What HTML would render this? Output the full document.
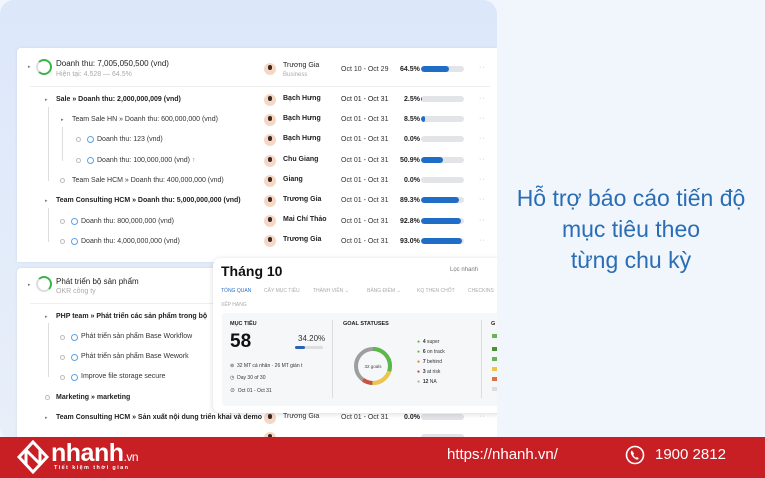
<!DOCTYPE html>
<html><head><meta charset="utf-8"><style>
*{margin:0;padding:0;box-sizing:border-box}
body{width:765px;height:478px;overflow:hidden;background:#f0f6fc;font-family:"Liberation Sans","Noto Sans CJK SC",sans-serif;position:relative;color:#222}
.abs{position:absolute}
.panel{left:0;top:0;width:497px;height:440px;background:linear-gradient(180deg,#dce7fa,#e8eff9);border-radius:14px}
.card{background:#fff;left:17px;width:480px;border-radius:4px 0 0 0;box-shadow:0 0 3px rgba(0,0,0,.08)}
.t{position:absolute;font-size:7px;white-space:nowrap;color:#333}
.b{font-weight:bold;color:#222}
.av{position:absolute;width:12px;height:12px;border-radius:50%;background:#f6d7c6}
.av:after{content:"";position:absolute;left:4px;top:2px;width:4px;height:5px;border-radius:2px;background:#3b2a24}
.bar{position:absolute;width:43px;height:6px;border-radius:3px;background:#e2e4e8;overflow:hidden}
.bar i{display:block;height:100%;background:#1f6dc6;border-radius:3px}
.dots{position:absolute;font-size:7px;color:#aaa;letter-spacing:1px}
.ic{position:absolute;width:7px;height:7px;border-radius:50%;border:1.5px solid #5aa3e8}
.ci{position:absolute;width:5px;height:5px;border-radius:50%;border:1px solid #bbb}
.tri{position:absolute;font-size:5px;color:#777}
.ln{position:absolute;background:#ddd}
.clip{position:absolute;left:0;top:0;width:497px;height:437px;overflow:hidden}
</style></head><body>
<div class="abs panel"></div>
<div class="clip">
<div class="abs card" style="top:48px;height:214px"></div>
<div class="abs card" style="top:268px;height:172px"></div>

<div class="tri" style="left:28px;top:64px">▸</div>
<div class="abs" style="left:36px;top:59px;width:16px;height:16px;border-radius:50%;border:2.5px solid #ddd;border-top-color:#3cb548;border-right-color:#3cb548;border-bottom-color:#3cb548"></div>
<div class="t" style="left:56px;top:59px;font-size:8px;color:#222">Doanh thu: 7,005,050,500 (vnd)</div>
<div class="t" style="left:56px;top:71px;color:#aaa">Hiện tại: 4.528 — 64.5%</div>
<div class="av" style="left:264px;top:63px"></div>
<div class="t b" style="left:283px;top:62px;font-weight:normal">Trương Gia</div>
<div class="t" style="left:283px;top:72px;font-size:6px;color:#aaa">Business</div>
<div class="t" style="left:341px;top:66px">Oct 10 - Oct 29</div>
<div class="t b" style="left:400px;top:66px">64.5%</div>
<div class="bar" style="left:421px;top:66px"><i style="width:65%"></i></div>
<div class="dots" style="left:479px;top:64px">··</div>
<div class="ln" style="left:30px;top:86px;width:460px;height:1px;background:#eee"></div>

<div class="ln" style="left:48px;top:107px;width:1px;height:74px"></div>
<div class="ln" style="left:62px;top:127px;width:1px;height:34px"></div>
<div class="ln" style="left:48px;top:208px;width:1px;height:34px"></div>

<div class="tri" style="left:45px;top:97px">▸</div>
<div class="t b" style="left:56px;top:96px">Sale » Doanh thu: 2,000,000,009 (vnd)</div>
<div class="av" style="left:264px;top:94px"></div><div class="t b" style="left:283px;top:95px">Bạch Hưng</div>
<div class="t b" style="left:341px;top:96px;font-weight:normal">Oct 01 - Oct 31</div><div class="t b" style="left:404px;top:96px">2.5%</div>
<div class="bar" style="left:421px;top:96px"><i style="width:3%"></i></div><div class="dots" style="left:479px;top:95px">··</div>

<div class="tri" style="left:61px;top:117px">▸</div>
<div class="t" style="left:72px;top:116px">Team Sale HN » Doanh thu: 600,000,000 (vnd)</div>
<div class="av" style="left:264px;top:114px"></div><div class="t b" style="left:283px;top:115px">Bạch Hưng</div>
<div class="t" style="left:341px;top:116px">Oct 01 - Oct 31</div><div class="t b" style="left:404px;top:116px">8.5%</div>
<div class="bar" style="left:421px;top:116px"><i style="width:9%"></i></div><div class="dots" style="left:479px;top:115px">··</div>

<div class="ci" style="left:76px;top:137px"></div><div class="ic" style="left:87px;top:136px"></div>
<div class="t" style="left:97px;top:136px">Doanh thu: 123 (vnd)</div>
<div class="av" style="left:264px;top:134px"></div><div class="t b" style="left:283px;top:135px">Bạch Hưng</div>
<div class="t" style="left:341px;top:136px">Oct 01 - Oct 31</div><div class="t b" style="left:404px;top:136px">0.0%</div>
<div class="bar" style="left:421px;top:136px"></div><div class="dots" style="left:479px;top:135px">··</div>

<div class="ci" style="left:76px;top:158px"></div><div class="ic" style="left:87px;top:157px"></div>
<div class="t" style="left:97px;top:157px">Doanh thu: 100,000,000 (vnd) <span style="color:#3cb548">↑</span></div>
<div class="av" style="left:264px;top:155px"></div><div class="t b" style="left:283px;top:156px">Chu Giang</div>
<div class="t" style="left:341px;top:157px">Oct 01 - Oct 31</div><div class="t b" style="left:400px;top:157px">50.9%</div>
<div class="bar" style="left:421px;top:157px"><i style="width:51%"></i></div><div class="dots" style="left:479px;top:156px">··</div>

<div class="ci" style="left:60px;top:178px"></div>
<div class="t" style="left:72px;top:177px">Team Sale HCM » Doanh thu: 400,000,000 (vnd)</div>
<div class="av" style="left:264px;top:175px"></div><div class="t b" style="left:283px;top:176px">Giang</div>
<div class="t" style="left:341px;top:177px">Oct 01 - Oct 31</div><div class="t b" style="left:404px;top:177px">0.0%</div>
<div class="bar" style="left:421px;top:177px"></div><div class="dots" style="left:479px;top:176px">··</div>

<div class="tri" style="left:45px;top:198px">▸</div>
<div class="t b" style="left:56px;top:197px">Team Consulting HCM » Doanh thu: 5,000,000,000 (vnd)</div>
<div class="av" style="left:264px;top:195px"></div><div class="t b" style="left:283px;top:196px">Trương Gia</div>
<div class="t" style="left:341px;top:197px">Oct 01 - Oct 31</div><div class="t b" style="left:400px;top:197px">89.3%</div>
<div class="bar" style="left:421px;top:197px"><i style="width:89%"></i></div><div class="dots" style="left:479px;top:196px">··</div>

<div class="ci" style="left:60px;top:219px"></div><div class="ic" style="left:71px;top:218px"></div>
<div class="t" style="left:81px;top:218px">Doanh thu: 800,000,000 (vnd)</div>
<div class="av" style="left:264px;top:215px"></div><div class="t b" style="left:283px;top:216px">Mai Chí Thảo</div>
<div class="t" style="left:341px;top:218px">Oct 01 - Oct 31</div><div class="t b" style="left:400px;top:218px">92.8%</div>
<div class="bar" style="left:421px;top:218px"><i style="width:93%"></i></div><div class="dots" style="left:479px;top:217px">··</div>

<div class="ci" style="left:60px;top:239px"></div><div class="ic" style="left:71px;top:238px"></div>
<div class="t" style="left:81px;top:238px">Doanh thu: 4,000,000,000 (vnd)</div>
<div class="av" style="left:264px;top:235px"></div><div class="t b" style="left:283px;top:236px">Trương Gia</div>
<div class="t" style="left:341px;top:238px">Oct 01 - Oct 31</div><div class="t b" style="left:400px;top:238px">93.0%</div>
<div class="bar" style="left:421px;top:238px"><i style="width:95%"></i></div><div class="dots" style="left:479px;top:237px">··</div>

<div class="tri" style="left:28px;top:282px">▸</div>
<div class="abs" style="left:36px;top:276px;width:16px;height:16px;border-radius:50%;border:2.5px solid #ddd;border-top-color:#3cb548;border-right-color:#3cb548"></div>
<div class="t" style="left:56px;top:277px;font-size:8px;color:#222">Phát triển bộ sản phẩm</div>
<div class="t" style="left:56px;top:288px;color:#aaa">OKR công ty</div>
<div class="ln" style="left:30px;top:303px;width:460px;height:1px;background:#eee"></div>
<div class="ln" style="left:48px;top:323px;width:1px;height:54px"></div>

<div class="tri" style="left:45px;top:314px">▸</div>
<div class="t b" style="left:56px;top:313px">PHP team » Phát triển các sản phẩm trong bộ</div>
<div class="ci" style="left:60px;top:335px"></div><div class="ic" style="left:71px;top:334px"></div>
<div class="t" style="left:81px;top:333px">Phát triển sản phẩm Base Workflow</div>
<div class="ci" style="left:60px;top:355px"></div><div class="ic" style="left:71px;top:354px"></div>
<div class="t" style="left:81px;top:353px">Phát triển sản phẩm Base Wework</div>
<div class="ci" style="left:60px;top:375px"></div><div class="ic" style="left:71px;top:374px"></div>
<div class="t" style="left:81px;top:373px">Improve file storage secure</div>
<div class="ci" style="left:45px;top:395px"></div>
<div class="t b" style="left:56px;top:394px">Marketing » marketing</div>
<div class="tri" style="left:45px;top:415px">▸</div>
<div class="t b" style="left:56px;top:414px">Team Consulting HCM » Sản xuất nội dung triển khai và demo</div>
<div class="av" style="left:264px;top:412px"></div><div class="t" style="left:283px;top:413px">Trương Gia</div>
<div class="t" style="left:341px;top:414px">Oct 01 - Oct 31</div><div class="t b" style="left:404px;top:414px">0.0%</div>
<div class="bar" style="left:421px;top:414px"></div><div class="dots" style="left:479px;top:413px">··</div>
<div class="av" style="left:264px;top:432px"></div>
<div class="bar" style="left:421px;top:434px"></div>

<!-- popup -->
<div class="abs" style="left:213px;top:258px;width:300px;height:155px;background:#fff;border-radius:8px;box-shadow:0 1px 6px rgba(0,0,0,.15)"></div>
<div class="t" style="left:221px;top:263px;font-size:14px;font-weight:bold;color:#111">Tháng 10</div>
<div class="t" style="left:450px;top:267px;font-size:6px;color:#777">Lọc nhanh</div>
<div class="t" style="left:221px;top:288px;font-size:5px;color:#2d72c4">TỔNG QUAN</div>
<div class="t" style="left:264px;top:288px;font-size:5px;color:#aaa">CÂY MỤC TIÊU</div>
<div class="t" style="left:313px;top:288px;font-size:5px;color:#aaa">THÀNH VIÊN ⌄</div>
<div class="t" style="left:367px;top:288px;font-size:5px;color:#aaa">BẢNG ĐIỂM ⌄</div>
<div class="t" style="left:417px;top:288px;font-size:5px;color:#aaa">KQ THEN CHỐT</div>
<div class="t" style="left:468px;top:288px;font-size:5px;color:#aaa">CHECKINS</div>
<div class="t" style="left:221px;top:302px;font-size:5px;color:#aaa">XẾP HẠNG</div>
<div class="abs" style="left:222px;top:313px;width:290px;height:93px;background:#f6f7f9;border-radius:3px"></div>
<div class="ln" style="left:332px;top:320px;width:1px;height:78px"></div>
<div class="ln" style="left:481px;top:320px;width:1px;height:78px"></div>
<div class="t b" style="left:230px;top:321px;font-size:5.5px">MỤC TIÊU</div>
<div class="t b" style="left:230px;top:331px;font-size:19px;color:#111">58</div>
<div class="t" style="left:298px;top:334px;font-size:8px">34.20%</div>
<div class="abs" style="left:295px;top:346px;width:28px;height:3px;background:#ddd;border-radius:2px"><div style="width:10px;height:3px;background:#2d62b8;border-radius:2px"></div></div>
<div class="t" style="left:230px;top:363px;font-size:5px">⊚&nbsp; 32 MT cá nhân · 26 MT gián t</div>
<div class="t" style="left:230px;top:375px;font-size:5px">◷&nbsp; Day 30 of 30</div>
<div class="t" style="left:230px;top:387px;font-size:5px">⊘&nbsp; Oct 01 - Oct 31</div>
<div class="t b" style="left:343px;top:321px;font-size:5.5px">GOAL STATUSES</div>
<svg class="abs" style="left:352px;top:345px" width="42" height="42" viewBox="0 0 42 42">
<circle cx="21" cy="21" r="17" fill="none" stroke="#9e9e9e" stroke-width="4"/>
<circle cx="21" cy="21" r="17" fill="none" stroke="#5cb84a" stroke-width="4" stroke-dasharray="32 107" transform="rotate(-90 21 21)"/>
<circle cx="21" cy="21" r="17" fill="none" stroke="#edc54a" stroke-width="4" stroke-dasharray="22 107" transform="rotate(18 21 21)"/>
<circle cx="21" cy="21" r="17" fill="none" stroke="#c8513f" stroke-width="4" stroke-dasharray="10 107" transform="rotate(92 21 21)"/>
<text x="21" y="23" font-size="4.5" text-anchor="middle" fill="#444" font-family="Liberation Sans">32 goals</text>
</svg>
<div class="t" style="left:417px;top:339px;font-size:5px"><span style="color:#5cb84a">●</span>&nbsp; <b>4</b> super</div>
<div class="t" style="left:417px;top:349px;font-size:5px"><span style="color:#5cb84a">●</span>&nbsp; <b>6</b> on track</div>
<div class="t" style="left:417px;top:359px;font-size:5px"><span style="color:#e07a45">●</span>&nbsp; <b>7</b> behind</div>
<div class="t" style="left:417px;top:369px;font-size:5px"><span style="color:#b8443a">●</span>&nbsp; <b>3</b> at risk</div>
<div class="t" style="left:417px;top:379px;font-size:5px"><span style="color:#aaa">●</span>&nbsp; <b>12</b> NA</div>
<div class="t b" style="left:491px;top:321px;font-size:5.5px">G</div>
<div class="abs" style="left:492px;top:334px;width:5px;height:4px;background:#6bb35a"></div>
<div class="abs" style="left:492px;top:347px;width:5px;height:4px;background:#4e8f3a"></div>
<div class="abs" style="left:492px;top:357px;width:5px;height:4px;background:#6bb35a"></div>
<div class="abs" style="left:492px;top:367px;width:5px;height:4px;background:#edc54a"></div>
<div class="abs" style="left:492px;top:377px;width:5px;height:4px;background:#d9714a"></div>
<div class="abs" style="left:492px;top:387px;width:5px;height:4px;background:#ddd"></div>
</div>

<div class="abs" style="left:497px;top:183px;width:268px;text-align:center;font-size:23px;line-height:31px;color:#2a6db5">Hỗ trợ báo cáo tiến độ<br>mục tiêu theo<br>từng chu kỳ</div>

<div class="abs" style="left:0;top:437px;width:765px;height:41px;background:#c81f25"></div>
<svg class="abs" style="left:16px;top:440px" width="34" height="34" viewBox="0 0 34 34"><path d="M17 2 L31 17 L17 32 L3 17 Z" fill="none" stroke="#fff" stroke-width="3"/><path d="M10 10 L24 24 M10 24 L10 10 M24 10 L24 24" stroke="#fff" stroke-width="3" fill="none"/></svg>
<div class="t" style="left:51px;top:439px;font-size:25px;font-weight:bold;color:#fff;letter-spacing:-0.5px">nhanh<span style="font-size:12px;font-weight:normal">.vn</span></div>
<div class="t" style="left:54px;top:465px;font-size:5.5px;font-weight:bold;color:#fff;letter-spacing:1.4px">Tiết kiệm thời gian</div>
<div class="t" style="left:447px;top:446px;font-size:15px;color:#fff">https://nhanh.vn/</div>
<svg class="abs" style="left:625px;top:445px" width="20" height="20" viewBox="0 0 20 20"><circle cx="10" cy="10" r="8.5" fill="none" stroke="#fff" stroke-width="1.6"/><path d="M7 5.5c-1.2.5-1.6 2-.8 3.8 1 2.2 2.6 4 4.6 5 1.4.6 2.6.3 3-.8l-1.8-1.6-1.2.8c-1-.5-2-1.6-2.6-2.8l.9-1.1z" fill="#fff"/></svg>
<div class="t" style="left:655px;top:446px;font-size:15px;color:#fff">1900 2812</div>
</body></html>
